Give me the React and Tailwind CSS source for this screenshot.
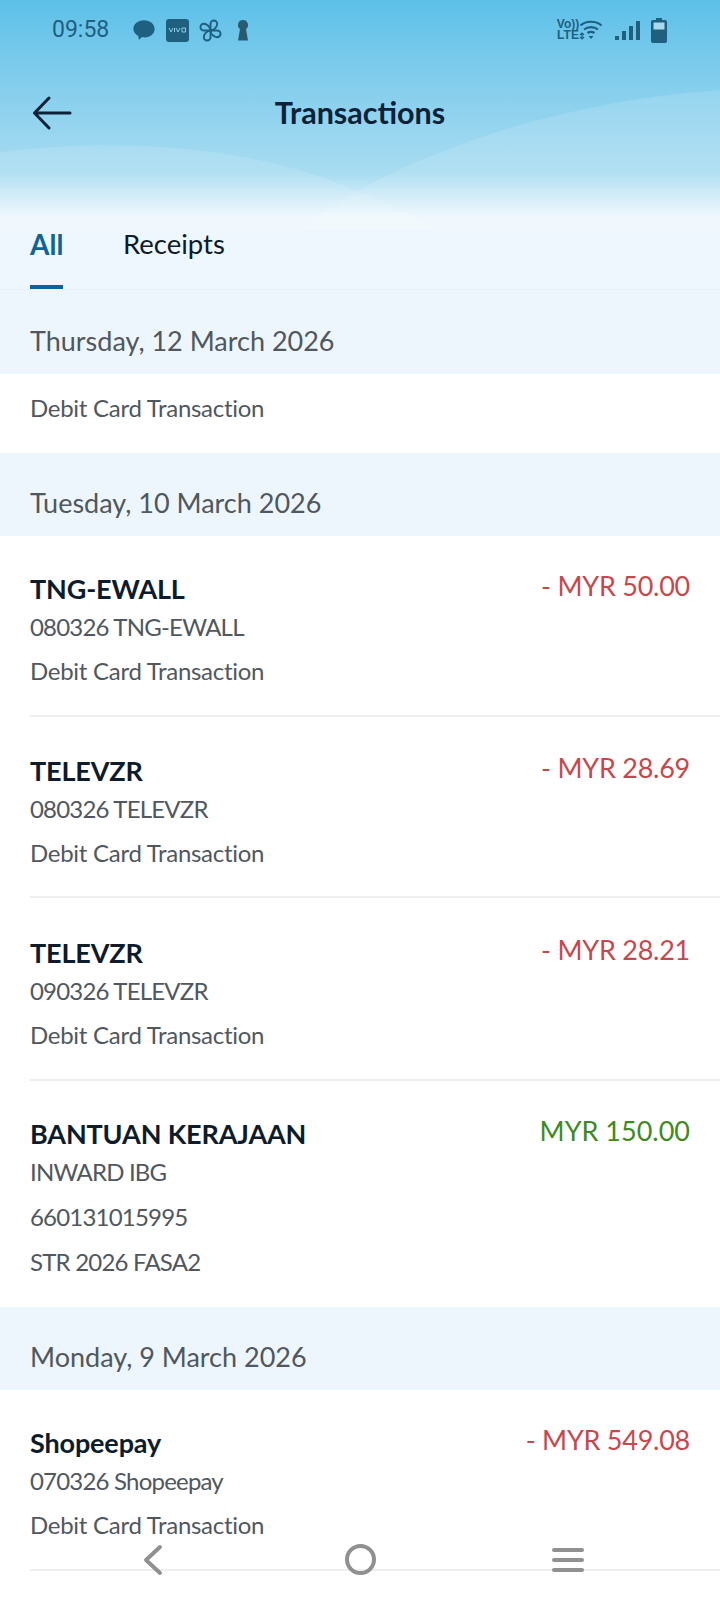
import React from 'react';

const font = { fontFamily: 'Lato, "Noto Sans", sans-serif' };

const sections = [
  {
    date: 'Thursday, 12 March 2026',
    rows: [{ lines: ['Debit Card Transaction'], simple: true }],
  },
  {
    date: 'Tuesday, 10 March 2026',
    rows: [
      { title: 'TNG-EWALL', lines: ['080326 TNG-EWALL', 'Debit Card Transaction'], amount: '- MYR 50.00', pad: 'pt-[33px] pb-[29px]' },
      { title: 'TELEVZR', lines: ['080326 TELEVZR', 'Debit Card Transaction'], amount: '- MYR 28.69', pad: 'pt-[34px] pb-[28px]' },
      { title: 'TELEVZR', lines: ['090326 TELEVZR', 'Debit Card Transaction'], amount: '- MYR 28.21', pad: 'pt-[35px] pb-[29px]' },
      { title: 'BANTUAN KERAJAAN', lines: ['INWARD IBG', '660131015995', 'STR 2026 FASA2'], amount: 'MYR 150.00', credit: true, last: true, pad: 'pt-[33px] pb-[30px]' },
    ],
  },
  {
    date: 'Monday, 9 March 2026',
    rows: [
      { title: 'Shopeepay', lines: ['070326 Shopeepay', 'Debit Card Transaction'], amount: '- MYR 549.08', pad: 'pt-[33px] pb-[29px]' },
    ],
  },
];

const StatusLeft = () => (
  <div className="flex items-center gap-[10px] ml-[23px]">
    <svg width="24" height="24" viewBox="0 0 26 24" fill="#1f5f7f">
      <path d="M13 1.500c6.500 0 11.500 3.800 11.500 9.500 0 5.400-5 9-10.500 9-1 0-2 0-3-.3L7.500 22.500l-.8-4C3.500 16.500 1.500 14 1.500 11c0-5.700 5-9.500 11.500-9.500z" />
    </svg>
    <div className="w-[23px] h-[23px] rounded-[3px] bg-[#1f5f7f] flex items-center justify-center">
      <svg width="19" height="6" viewBox="0 0 19 6" fill="none" stroke="#8cc8e0" strokeWidth="1">
        <path d="M1 1l2 4 2-4M6.500 1v4M8 1l2 4 2-4M14 1h3.500v4H14z" />
      </svg>
    </div>
    <svg width="23" height="23" viewBox="0 0 24 24" fill="none" stroke="#1f5f7f" strokeWidth="2" strokeLinejoin="round">
      {[0, 90, 180, 270].map((deg) => (
        <path key={deg} transform={`rotate(${deg} 12 12)`} d="M12 12V5a3.500 3.500 0 0 1 7 0c0 3-3 7-7 7z" />
      ))}
    </svg>
    <svg width="16" height="23" viewBox="0 0 16 23" fill="#2a5a70" className="ml-[3px]">
      <path d="M8 1a5 5 0 0 1 3 9l2 11.500H3L5 10A5 5 0 0 1 8 1z" />
    </svg>
  </div>
);

const StatusRight = () => (
  <div className="flex items-center mr-[53px]">
    <div className="flex flex-col items-center leading-[11px] text-[#1f5f7f] text-[12px] font-bold w-[20px] mt-[-1px]" style={{ fontFamily: '"Liberation Sans", sans-serif' }}>
      <span>Vo))</span>
      <span>LTE</span>
    </div>
    <svg width="24" height="22" viewBox="0 0 24 22" fill="none" stroke="#1f5f7f" strokeWidth="2.200" className="ml-[1px]">
      <path d="M1.500 6.500C7 1.500 17 1.500 22.500 6.500M5 10.500c4-3.200 10-3.200 14 0M8.500 14c2-1.400 5-1.400 7 0" />
      <path d="M12 20l-2.500-3h5z" fill="#1f5f7f" stroke="none" />
      <path d="M3 14v6M1 16l2-2 2 2M1 18l2 2 2-2" strokeWidth="1.200" />
    </svg>
    <div className="flex items-end gap-[3px] ml-[12px] h-[19px]">
      <div className="w-[4px] h-[4px] bg-[#1f5f7f]" />
      <div className="w-[4px] h-[9px] bg-[#1f5f7f]" />
      <div className="w-[4px] h-[14px] bg-[#1f5f7f]" />
      <div className="w-[4px] h-[19px] bg-[#1f5f7f]" />
    </div>
    <svg width="16" height="25" viewBox="0 0 16 25" className="ml-[11px]">
      <path d="M5 0h6v2h3a2 2 0 0 1 2 2v19a2 2 0 0 1-2 2H2a2 2 0 0 1-2-2V4a2 2 0 0 1 2-2h3z" fill="#1f5f7f" />
      <rect x="2.500" y="4.500" width="11" height="7" fill="#a9d9ee" />
    </svg>
  </div>
);

const Wave = () => (
  <svg className="absolute top-[60px] left-0" width="720" height="170" viewBox="0 0 720 170" fill="none">
    <path d="M0 92C110 78 240 84 340 124C380 140 410 155 440 170H0Z" fill="#ffffff" fillOpacity="0.13" />
    <path d="M300 170C400 90 570 40 720 30V170Z" fill="#ffffff" fillOpacity="0.13" />
  </svg>
);

const Row = ({ row }) => {
  if (row.simple) {
    return (
      <div className="bg-white h-[79px] pl-[30px] pt-[19px]">
        <div className="text-[24px] leading-[30px] text-[#50575e] tracking-[-0.28px]">{row.lines[0]}</div>
      </div>
    );
  }
  return (
    <div className="bg-white pl-[30px]">
      <div className={`pr-[30px] ${row.pad} ${row.last ? '' : 'border-b-2 border-[#eeeeee]'}`}>
        <div className="flex justify-between items-start">
          <div className="text-[27px] leading-[38px] font-bold text-[#0d1b2a] tracking-[-0.15px] mt-[1px]">{row.title}</div>
          <div className={`text-[27px] leading-[38px] mt-[-2px] ${row.credit ? 'text-[#3f8a1d]' : 'text-[#c8474c] tracking-[-0.25px]'}`}>{row.amount}</div>
        </div>
        {row.lines.map((line, i) => {
          const isDebit = line === 'Debit Card Transaction';
          return (
            <div
              key={i}
              className={`text-[24px] leading-[30px] text-[#50575e] ${i === 0 ? 'mt-[4px]' : isDebit ? 'mt-[14px]' : 'mt-[15px]'} ${isDebit ? 'tracking-[-0.28px]' : 'tracking-[-0.8px]'}`}
            >
              {line}
            </div>
          );
        })}
      </div>
    </div>
  );
};

export default function App() {
  return (
    <div className="relative w-[720px] h-[1600px] overflow-hidden bg-white" style={font}>
      {/* Header */}
      <div className="relative h-[290px] bg-gradient-to-b from-[#5cc0e8] via-[#a8dcf1] via-[60%] to-[#eef7fd] to-[75%] border-b border-[#e6f0f6]">
        <Wave />
        <div className="relative flex items-center justify-between h-[60px]">
          <div className="flex items-center">
            <span className="text-[23px] text-[#1f5f7f] ml-[52px]" style={{ fontFamily: 'Roboto, sans-serif' }}>09:58</span>
            <StatusLeft />
          </div>
          <StatusRight />
        </div>
        <div className="relative h-[106px] flex items-center justify-center">
          <svg className="absolute left-[32px] top-[36px]" width="40" height="34" viewBox="0 0 40 34" fill="none" stroke="#0d2238" strokeWidth="3" strokeLinecap="round" strokeLinejoin="round">
            <path d="M38 17H3M17 2L2.500 17 17 32" />
          </svg>
          <h1 className="text-[30.5px] font-bold text-[#0d2238]">Transactions</h1>
        </div>
        <div className="relative flex pl-[30px] mt-[57px]">
          <div className="w-[33px]">
            <div className="text-[28px] leading-[36px] font-bold text-[#0f6496] mt-[3px]">All</div>
            <div className="w-[33px] h-[4px] bg-[#0f6496] mt-[23px]" />
          </div>
          <div className="text-[27.500px] leading-[36px] text-[#0d1b2a] ml-[60px] mt-[3px]">Receipts</div>
        </div>
      </div>

      {sections.map((s, i) => (
        <div key={s.date}>
          <div className={`bg-[#eef6fd] pl-[30px] pt-[18px] flex items-center ${i === 0 ? 'h-[84px]' : 'h-[83px]'}`}>
            <span className="text-[27px] text-[#50575e]">{s.date}</span>
          </div>
          {s.rows.map((row, j) => <Row key={j} row={row} />)}
        </div>
      ))}

      {/* Android nav buttons */}
      <div className="absolute left-0 bottom-0 w-full h-[70px]">
        <svg className="absolute left-[141px] top-[14px]" width="24" height="32" viewBox="0 0 24 32" fill="none" stroke="#909090" strokeWidth="4" strokeLinecap="round" strokeLinejoin="round">
          <path d="M19 3L5 16l14 13" />
        </svg>
        <div className="absolute left-[345px] top-[14px] w-[31px] h-[31px] rounded-full border-[4px] border-[#909090]" />
        <div className="absolute left-[552px] top-[18px] w-[32px] flex flex-col gap-[6px]">
          <div className="h-[4px] rounded-full bg-[#909090]" />
          <div className="h-[4px] rounded-full bg-[#909090]" />
          <div className="h-[4px] rounded-full bg-[#909090]" />
        </div>
      </div>
    </div>
  );
}
